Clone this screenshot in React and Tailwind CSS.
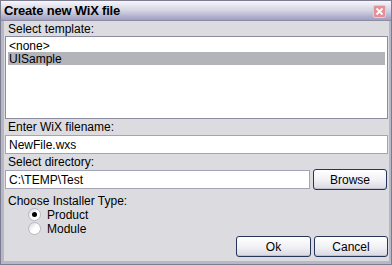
import React from "react";

function Radio({ checked, label, h }) {
  return (
    <div className={`flex items-center ${h}`}>
      <div className="w-[13px] h-[13px] rounded-full border border-[#b8b8c0] bg-gradient-to-br from-[#d4d4dc] via-white to-white flex items-center justify-center ml-[23px]">
        {checked && <div className="w-[5px] h-[5px] rounded-full bg-black" />}
      </div>
      <span className="ml-[6px]">{label}</span>
    </div>
  );
}

function Btn({ children, w }) {
  return (
    <div
      className={`${w} h-[21px] rounded-[3px] border border-[#26365a] bg-gradient-to-b from-white via-[#f2f2f6] to-[#d8d8e2] flex items-center justify-center shadow-[inset_0_-1px_0_#c0c0d0]`}
    >
      {children}
    </div>
  );
}

export default function App() {
  return (
    <div
      className="w-[392px] h-[265px] bg-[#dcdce0] border border-[#7c7c90] flex flex-col overflow-hidden text-[12px] text-black"
      style={{ fontFamily: '"Liberation Sans", Arial, sans-serif' }}
    >
      <div className="h-[20px] shrink-0 bg-gradient-to-b from-[#f6f6fa] via-[#d4d4e4] to-[#9e9ec0] flex items-center justify-between pl-[3px] pr-[5px] border-b border-[#8c8ca4]">
        <span className="font-bold text-[13px] leading-none tracking-[-0.2px]">Create new WiX file</span>
        <div className="w-[13px] h-[13px] mt-[1px] rounded-[2px] bg-[#e49098] border border-[#f4c4c8] flex items-center justify-center">
          <svg width="9" height="9" viewBox="0 0 9 9">
            <path d="M1.5 1.5 L7.5 7.5 M7.5 1.5 L1.5 7.5" stroke="white" strokeWidth="1.8" />
          </svg>
        </div>
      </div>
      <div className="flex-1 flex flex-col border-l-[3px] border-r-[2px] border-b-[3px] border-[#b8b8c4] pl-[1px] pr-[1px]">
        <div className="h-[14px] flex items-center pl-[3px] mt-[1px]">Select template:</div>
        <div className="h-[83px] shrink-0 bg-white border border-[#8c8ca0] p-[2px] pt-[2px] flex flex-col">
          <div className="h-[13px] flex items-center pl-[1px]">&lt;none&gt;</div>
          <div className="h-[13px] flex items-center pl-[1px] bg-[#b3b3ba]">UISample</div>
        </div>
        <div className="h-[16px] flex items-center pl-[3px]">Enter WiX filename:</div>
        <div className="h-[19px] shrink-0 bg-white border border-[#a4a4b4] flex items-center pl-[3px]">NewFile.wxs</div>
        <div className="h-[16px] flex items-center pl-[3px]">Select directory:</div>
        <div className="flex items-center gap-[3px] h-[19px] shrink-0">
          <div className="w-[305px] h-[19px] bg-white border border-[#a4a4b4] flex items-center pl-[3px]">C:\TEMP\Test</div>
          <Btn w="w-[74px]">Browse</Btn>
        </div>
        <div className="h-[14px] mt-[5px] flex items-center pl-[3px]">Choose Installer Type:</div>
        <Radio checked label="Product" h="h-[13px]" />
        <Radio label="Module" h="h-[15px]" />
        <div className="flex justify-end gap-[3px]">
          <Btn w="w-[75px]">Ok</Btn>
          <Btn w="w-[74px]">Cancel</Btn>
        </div>
      </div>
    </div>
  );
}
